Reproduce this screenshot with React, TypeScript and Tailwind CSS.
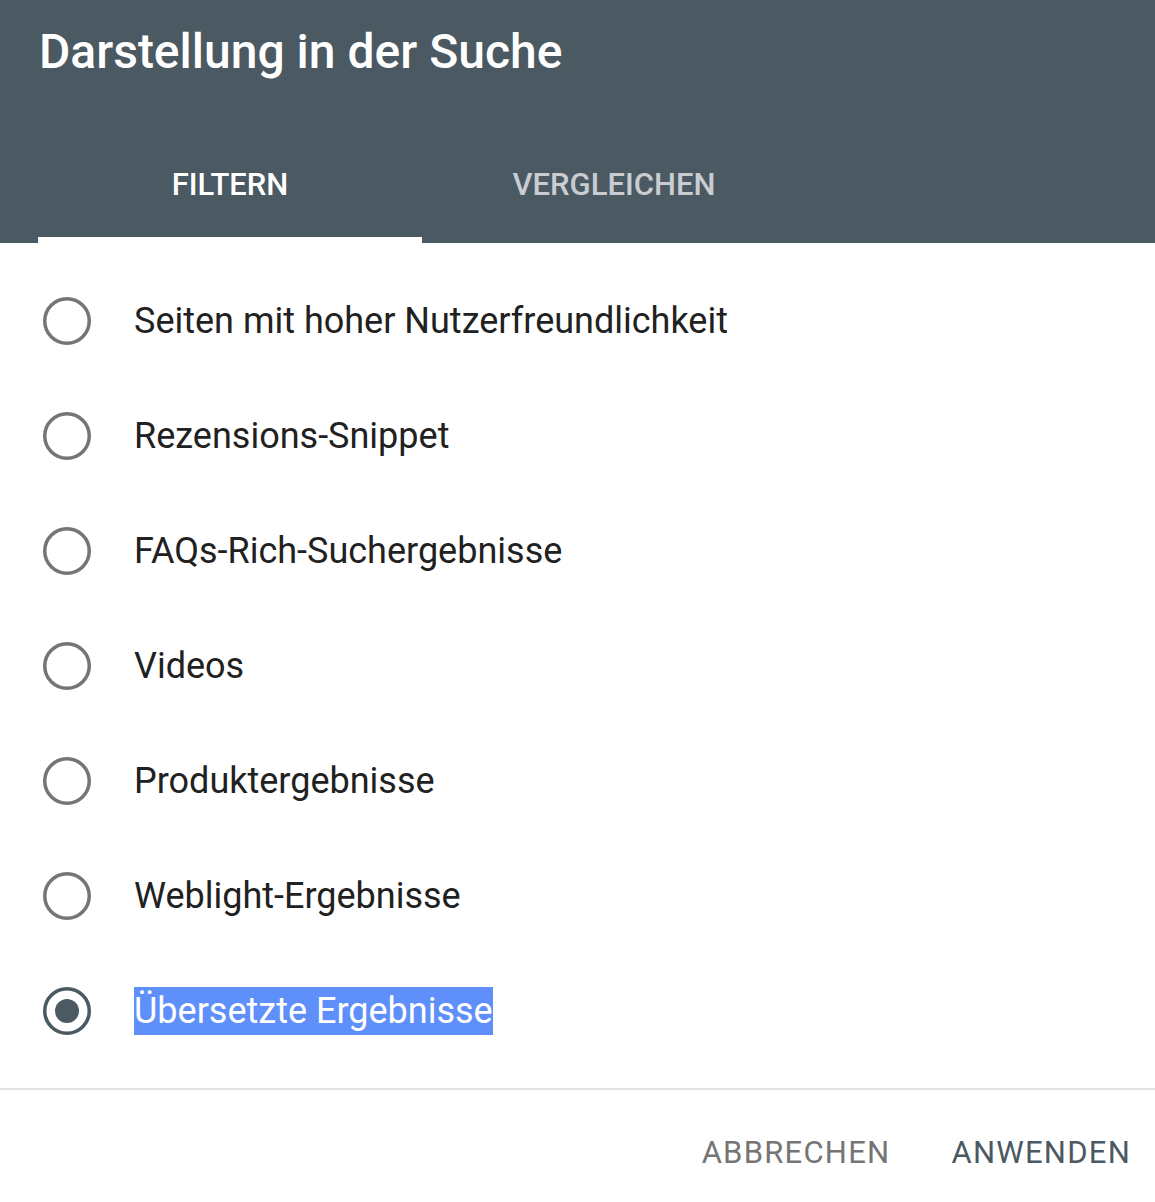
import React from "react";

const items = [
  "Seiten mit hoher Nutzerfreundlichkeit",
  "Rezensions-Snippet",
  "FAQs-Rich-Suchergebnisse",
  "Videos",
  "Produktergebnisse",
  "Weblight-Ergebnisse",
  "Übersetzte Ergebnisse",
];

function Radio({ checked }: { checked: boolean }) {
  return (
    <svg width="48" height="48" viewBox="0 0 48 48" className="shrink-0">
      <circle
        cx="24"
        cy="24"
        r="22.25"
        fill="none"
        stroke={checked ? "#4b5963" : "#757575"}
        strokeWidth="3.5"
      />
      {checked && <circle cx="24" cy="24" r="12" fill="#4b5963" />}
    </svg>
  );
}

export default function App() {
  return (
    <div
      className="w-[1155px] h-[1202px] bg-white overflow-hidden"
      style={{ fontFamily: "Roboto, 'Noto Sans', sans-serif" }}
    >
      <div className="h-[243px] bg-[#4b5963] flex flex-col">
        <div className="pt-[28px] pl-[39px] text-[48px] leading-[48px] font-medium text-white">
          Darstellung in der Suche
        </div>
        <div className="mt-[51px] flex pl-[38px]">
          <div className="relative w-[384px] h-[116px] flex items-center justify-center text-[31px] leading-[30px] font-medium text-white">
            FILTERN
            <div className="absolute left-0 right-0 bottom-0 h-[6px] bg-white" />
          </div>
          <div className="w-[384px] h-[116px] flex items-center justify-center text-[31px] leading-[30px] font-medium text-[#c9cdd1]">
            VERGLEICHEN
          </div>
        </div>
      </div>
      <div className="pt-[20px] pb-[20px]">
        {items.map((label, i) => {
          const checked = i === items.length - 1;
          return (
            <div key={label} className="h-[115px] flex items-center pl-[43px] gap-[43px]">
              <Radio checked={checked} />
              {checked ? (
                <span className="inline-block h-[48px] leading-[48px] bg-[#5f8ffa] text-white text-[36px]">
                  {label}
                </span>
              ) : (
                <span className="text-[36px] leading-[48px] text-[#212121]">{label}</span>
              )}
            </div>
          );
        })}
      </div>
      <div className="h-[2px] bg-[#e2e2e2]" />
      <div className="pt-[48px] flex justify-end gap-[61px] pr-[24px] text-[31px] leading-[30px] tracking-[0.04em]">
        <span className="text-[#757575]">ABBRECHEN</span>
        <span className="text-[#4b5963]">ANWENDEN</span>
      </div>
    </div>
  );
}
